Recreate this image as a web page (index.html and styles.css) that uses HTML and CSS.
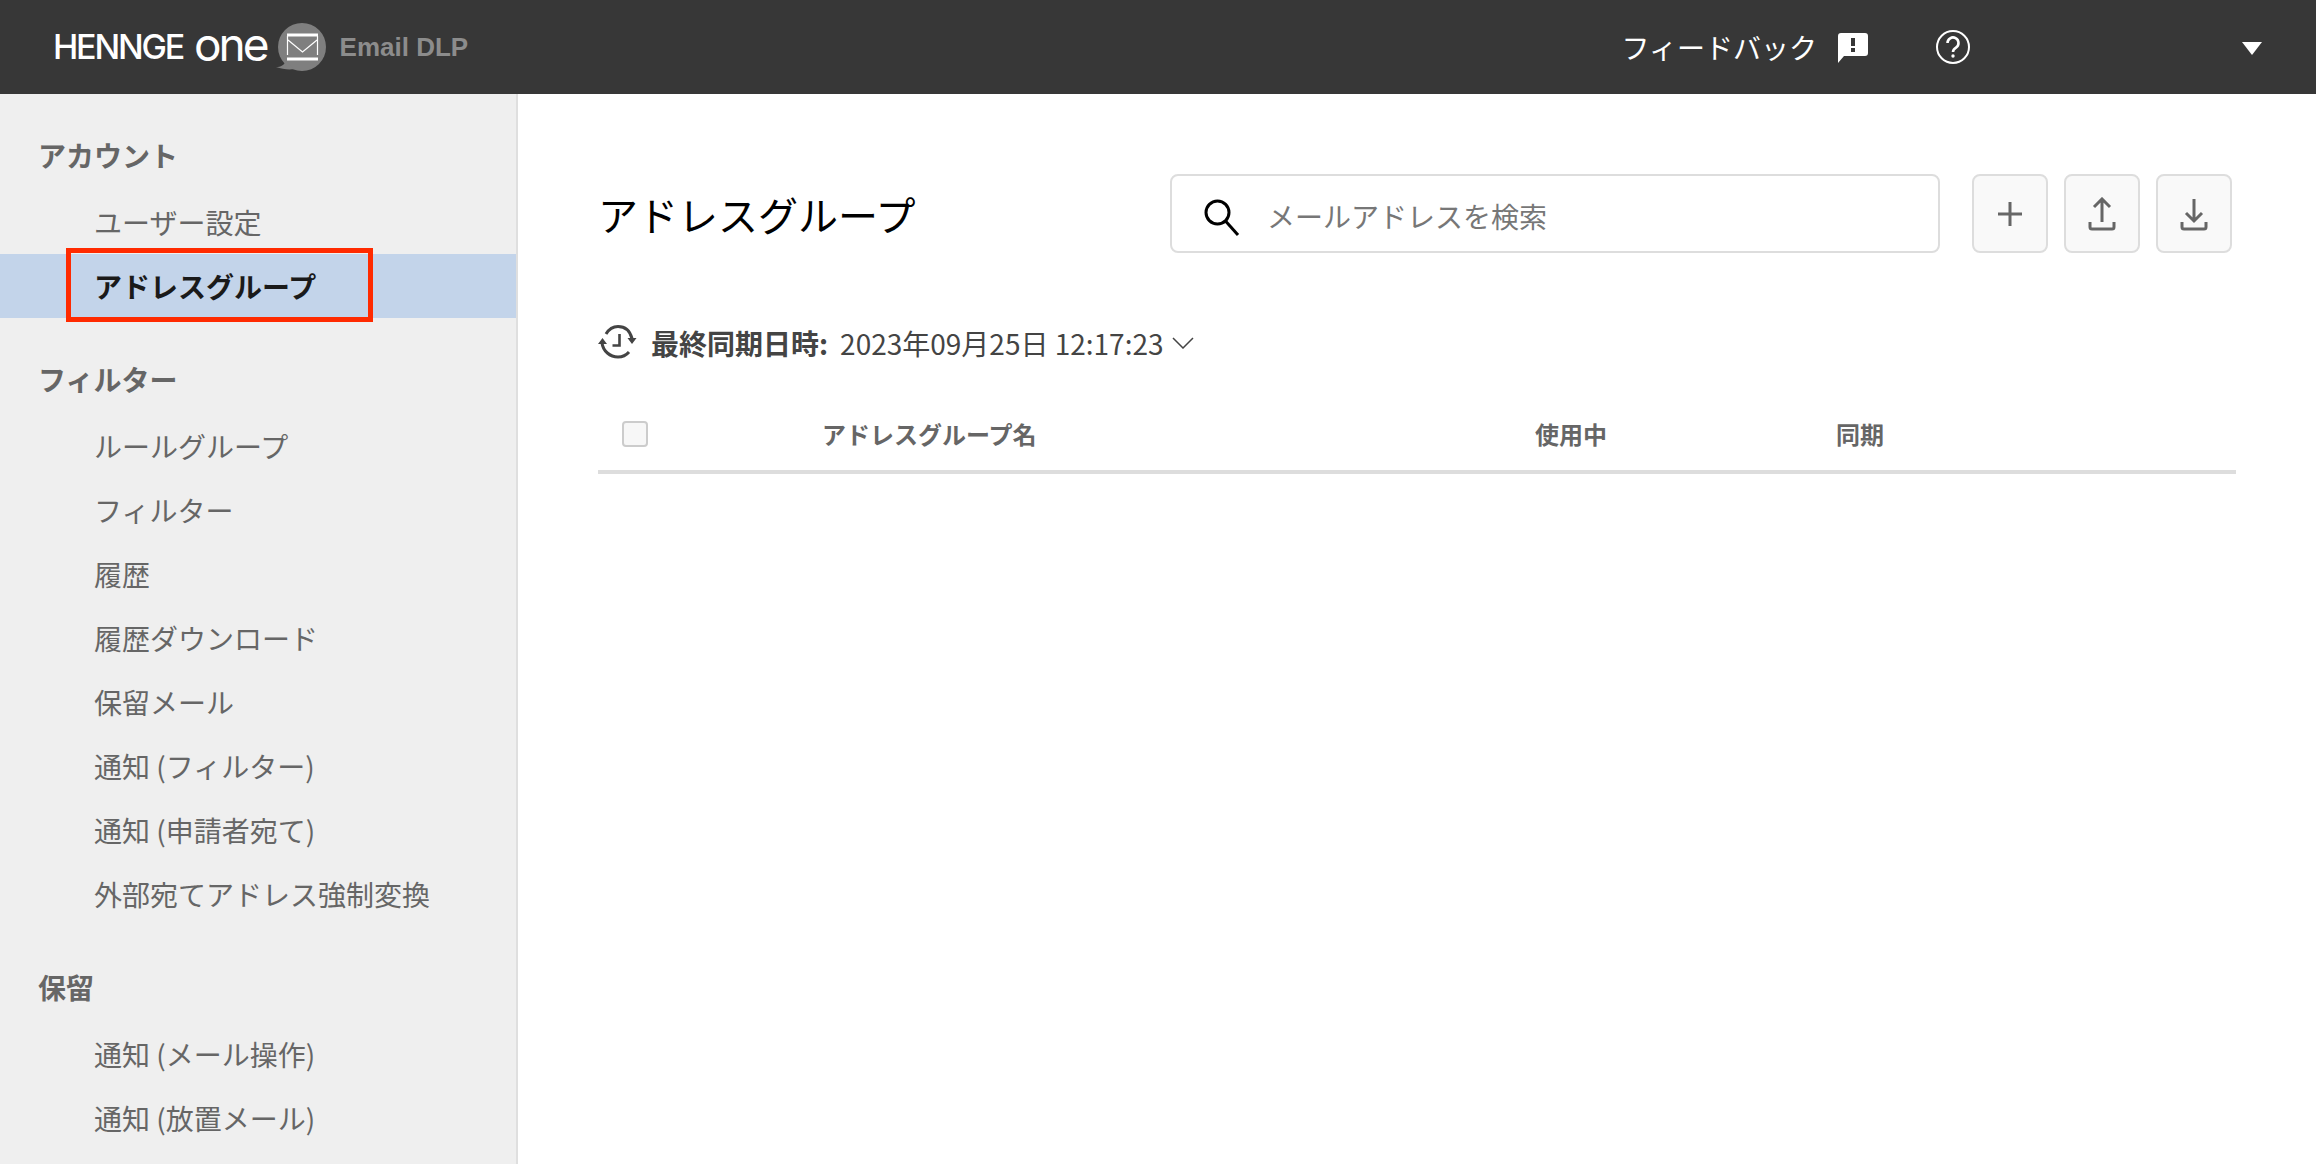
FILE: index.html
```html
<!DOCTYPE html>
<html lang="ja">
<head>
<meta charset="utf-8">
<title>アドレスグループ</title>
<link rel="stylesheet" href="styles.css">
</head>
<body>
<header class="topbar">
  <div class="brand">
    <span class="brand-name">HENNGE</span>
    <span class="brand-one">one</span>
    <svg class="brand-icon" width="52" height="50" viewBox="0 0 52 50">
      <circle cx="27" cy="25" r="24" fill="#7f7f7f"/>
      <path d="M1 45c5 0 8-2 10-6l8 8c-5 1-12 0-18-2z" fill="#7f7f7f"/>
      <path d="M12 13h31M12 37h31" stroke="#fff" stroke-width="3" fill="none"/>
      <path d="M12.500 14v19M42.500 14v19M13 18l14.500 12L42 18" stroke="#fff" stroke-width="1.200" fill="none"/>
    </svg>
    <span class="brand-product">Email DLP</span>
  </div>
  <div class="top-actions">
    <span class="feedback">フィードバック</span>
    <svg class="feedback-icon" width="30" height="30" viewBox="0 0 30 30">
      <path d="M3 0h24a3 3 0 0 1 3 3v17a3 3 0 0 1-3 3H6l-6 7V3a3 3 0 0 1 3-3z" fill="#fff"/>
      <path d="M13 5h4v8h-4zM13 15h4v4h-4z" fill="#373737"/>
    </svg>
    <svg class="help-icon" width="36" height="36" viewBox="0 0 36 36">
      <circle cx="18" cy="18" r="16" fill="none" stroke="#fff" stroke-width="2"/>
      <path d="M12.500 14a5.500 5.500 0 1 1 8.500 4.600c-2 1.300-3 2.400-3 4.400" fill="none" stroke="#fff" stroke-width="2.600"/>
      <circle cx="18" cy="27" r="1.700" fill="#fff"/>
    </svg>
    <span class="user-caret"></span>
  </div>
</header>
<div class="layout">
  <nav class="sidebar">
    <section class="nav-group">
      <h2 class="nav-title">アカウント</h2>
      <a class="nav-item">ユーザー設定</a>
      <a class="nav-item active">アドレスグループ<span class="highlight"></span></a>
    </section>
    <section class="nav-group">
      <h2 class="nav-title">フィルター</h2>
      <a class="nav-item">ルールグループ</a>
      <a class="nav-item">フィルター</a>
      <a class="nav-item">履歴</a>
      <a class="nav-item">履歴ダウンロード</a>
      <a class="nav-item">保留メール</a>
      <a class="nav-item">通知 (フィルター)</a>
      <a class="nav-item">通知 (申請者宛て)</a>
      <a class="nav-item">外部宛てアドレス強制変換</a>
    </section>
    <section class="nav-group">
      <h2 class="nav-title">保留</h2>
      <a class="nav-item">通知 (メール操作)</a>
      <a class="nav-item">通知 (放置メール)</a>
    </section>
  </nav>
  <main class="content">
    <div class="toolbar">
      <h1 class="page-title">アドレスグループ</h1>
      <div class="search">
        <svg width="36" height="44" viewBox="0 0 36 44">
          <circle cx="13.500" cy="20.500" r="11.500" fill="none" stroke="#000" stroke-width="3"/>
          <path d="M21.500 29L34 43" stroke="#000" stroke-width="3" fill="none"/>
        </svg>
        <span class="search-placeholder">メールアドレスを検索</span>
      </div>
      <div class="tool-buttons">
        <button class="tool-btn">
          <svg width="26" height="26" viewBox="0 0 26 26"><path d="M13 1v24M1 13h24" stroke="#666" stroke-width="3" fill="none"/></svg>
        </button>
        <button class="tool-btn">
          <svg width="28" height="34" viewBox="0 0 28 34"><path d="M14 25V3M6 10l8-8 8 8M2 25v5a2 2 0 0 0 2 2h20a2 2 0 0 0 2-2v-5" stroke="#666" stroke-width="3" fill="none"/></svg>
        </button>
        <button class="tool-btn">
          <svg width="28" height="34" viewBox="0 0 28 34"><path d="M14 2v22M6 16l8 8 8-8M2 25v5a2 2 0 0 0 2 2h20a2 2 0 0 0 2-2v-5" stroke="#666" stroke-width="3" fill="none"/></svg>
        </button>
      </div>
    </div>
    <div class="sync">
      <svg class="sync-icon" width="40" height="36" viewBox="0 0 40 36">
        <path d="M8 9C11 4 15 1.500 20 1.500c7 0 12 4.500 14 12M4 18c1 8 8 14 16 14 4.500 0 8-1.500 11-5" fill="none" stroke="#444" stroke-width="3"/>
        <path d="M29.500 13h9l-4.500 6zM0 19h9l-4.500-6z" fill="#444"/>
        <path d="M21.500 9v11.500h-7" fill="none" stroke="#444" stroke-width="2.600"/>
      </svg>
      <strong class="sync-label">最終同期日時:</strong>
      <span class="sync-value">2023年09月25日 12:17:23</span>
      <svg class="sync-chevron" width="22" height="12" viewBox="0 0 22 12"><path d="M1 1l10 10L21 1" fill="none" stroke="#444" stroke-width="1.500"/></svg>
    </div>
    <div class="table-head">
      <span class="checkbox"></span>
      <span class="col-label">アドレスグループ名</span>
      <span class="col-label">使用中</span>
      <span class="col-label">同期</span>
    </div>
  </main>
</div>
</body>
</html>
```
FILE: styles.css
```css
* { box-sizing: border-box; }
html, body { margin: 0; height: 100%; overflow: hidden; }
body {
  font-family: "Noto Sans CJK JP", "Noto Sans", sans-serif;
  font-size: 28px;
  background: #fff;
  color: #444;
}
.topbar {
  height: 94px;
  background: #373737;
  display: flex;
  align-items: center;
  justify-content: space-between;
  padding: 0 54px 0 53px;
}
.brand { display: flex; align-items: center; color: #fff; }
.brand-name {
  font-family: "Inter", sans-serif;
  font-size: 34px;
  font-weight: 500;
  letter-spacing: -2.2px;
  line-height: 40px;
}
.brand-one {
  font-family: "Inter", sans-serif;
  font-size: 46px;
  font-weight: 400;
  letter-spacing: -3px;
  line-height: 40px;
  margin-left: 11px;
  margin-top: -6px;
}
.brand-icon { margin-left: 8px; }
.brand-product {
  font-family: "Liberation Sans", sans-serif;
  font-size: 26px;
  font-weight: 700;
  color: #8c8c8c;
  margin-left: 13px;
}
.top-actions { display: flex; align-items: center; }
.feedback { color: #fff; font-size: 28px; line-height: 40px; }
.feedback-icon { margin-left: 21px; margin-top: 2px; }
.help-icon { margin-left: 67px; }
.user-caret {
  margin-left: 271px;
  width: 0;
  height: 0;
  border-left: 10px solid transparent;
  border-right: 10px solid transparent;
  border-top: 13px solid #fff;
  margin-top: 2px;
}
.layout { display: flex; height: 1070px; }
.sidebar {
  width: 518px;
  flex: none;
  background: #efefef;
  border-right: 2px solid #dfdfdf;
  padding-top: 39px;
}
.nav-group { margin-bottom: 39px; }
.nav-title {
  margin: 0 0 13px;
  padding-left: 38px;
  font-size: 28px;
  font-weight: 700;
  line-height: 44px;
  color: #666;
}
.nav-item {
  display: block;
  position: relative;
  height: 64px;
  line-height: 64px;
  padding-left: 94px;
  font-size: 28px;
  color: #666;
}
.nav-item.active { background: #c3d4ea; color: #1a1a1a; font-weight: 700; }
.highlight {
  position: absolute;
  left: 66px;
  top: -6px;
  width: 307px;
  height: 74px;
  border: 5px solid #ff2a00;
}
.content { flex: 1; padding: 80px 80px 0; }
.toolbar { display: flex; align-items: center; height: 79px; padding-right: 4px; }
.page-title { margin: 0; font-size: 40px; font-weight: 400; color: #000; line-height: 60px; }
.search {
  margin-left: auto;
  width: 770px;
  height: 79px;
  display: flex;
  align-items: center;
  gap: 27px;
  padding-left: 32px;
  border: 2px solid #ddd;
  border-radius: 8px;
}
.search-placeholder { color: #777; font-size: 28px; padding-top: 5px; }
.tool-buttons { display: flex; gap: 16px; margin-left: 32px; }
.tool-btn {
  width: 76px;
  height: 79px;
  padding: 0;
  display: flex;
  align-items: center;
  justify-content: center;
  background: #f9f9f9;
  border: 2px solid #ddd;
  border-radius: 8px;
}
.sync { display: flex; align-items: center; height: 40px; margin-top: 70px; }
.sync-label { margin-left: 13px; font-size: 28px; color: #444; }
.sync-value { margin-left: 12px; font-size: 28px; color: #444; }
.sync-chevron { margin-left: 8px; }
.table-head {
  display: grid;
  grid-template-columns: 224px 713px 301px 1fr;
  align-items: center;
  height: 76px;
  margin-top: 35px;
  border-bottom: 4px solid #ddd;
  font-size: 24px;
  font-weight: 700;
  color: #666;
}
.col-label { margin-top: -2px; }
.checkbox {
  display: block;
  width: 26px;
  height: 26px;
  margin-left: 24px;
  background: #f7f7f7;
  border: 2px solid #ccc;
  border-radius: 4px;
}
```
